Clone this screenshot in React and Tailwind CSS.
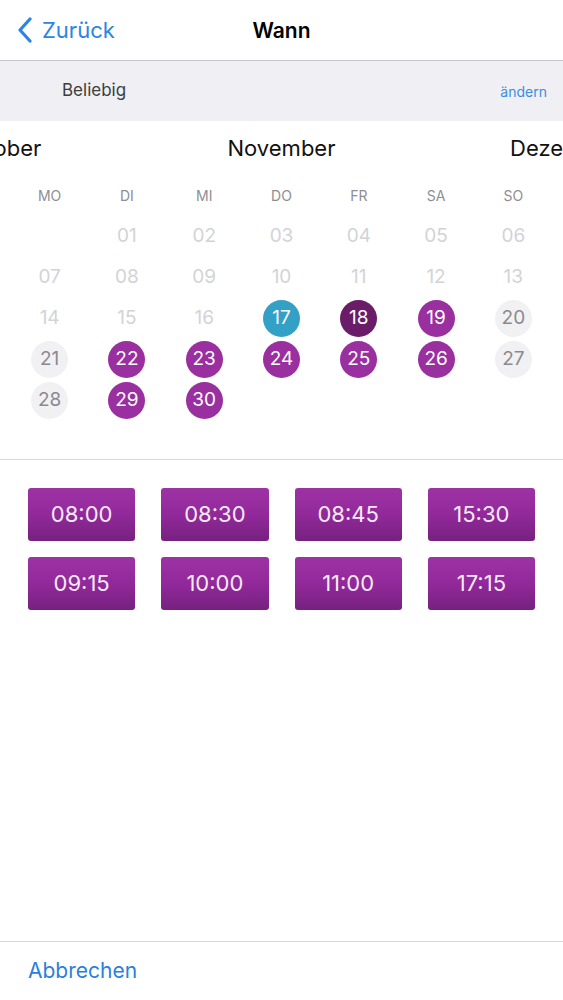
import React from "react";

const WEEKDAYS = ["MO", "DI", "MI", "DO", "FR", "SA", "SO"];

// type: f = faded, g = grey circle, p = purple, d = dark purple, b = blue, e = empty
const ROWS = [
  [["", "e"], ["01", "f"], ["02", "f"], ["03", "f"], ["04", "f"], ["05", "f"], ["06", "f"]],
  [["07", "f"], ["08", "f"], ["09", "f"], ["10", "f"], ["11", "f"], ["12", "f"], ["13", "f"]],
  [["14", "f"], ["15", "f"], ["16", "f"], ["17", "b"], ["18", "d"], ["19", "p"], ["20", "g"]],
  [["21", "g"], ["22", "p"], ["23", "p"], ["24", "p"], ["25", "p"], ["26", "p"], ["27", "g"]],
  [["28", "g"], ["29", "p"], ["30", "p"], ["", "e"], ["", "e"], ["", "e"], ["", "e"]],
];

const TIMES = ["08:00", "08:30", "08:45", "15:30", "09:15", "10:00", "11:00", "17:15"];

function Day({ label, type }) {
  if (type === "e") return <div className="h-[41px]" />;
  if (type === "f")
    return (
      <div className="h-[41px] flex items-center justify-center text-[19px] text-[#d3d3d7]">
        {label}
      </div>
    );
  const cls =
    type === "g"
      ? "bg-[#f1f1f3] text-[#8a8a8e]"
      : type === "b"
      ? "bg-[#33a0c6] text-white"
      : type === "d"
      ? "bg-[#6b1c68] text-white"
      : "bg-[#9a2f9f] text-white";
  return (
    <div className="h-[41px] flex items-center justify-center">
      <div className={`w-[37px] h-[37px] rounded-full flex items-center justify-center text-[19px] ${cls}`}>
        {label}
      </div>
    </div>
  );
}

export default function App() {
  return (
    <div
      className="w-[563px] min-h-[1000px] flex flex-col bg-white overflow-hidden"
      style={{ fontFamily: "Inter, 'Noto Sans', sans-serif" }}
    >
      {/* Nav bar */}
      <div className="h-[61px] grid grid-cols-[1fr_auto_1fr] items-center border-b border-[#c8c7cc]">
        <div className="flex items-center pl-[17px] gap-[9px] text-[#2c84e4]">
          <svg width="16" height="26" viewBox="0 0 16 26" fill="none">
            <path d="M13 2 L3 13 L13 24" stroke="#2c84e4" strokeWidth="3.2" strokeLinecap="round" strokeLinejoin="round" />
          </svg>
          <span className="text-[22px] leading-none">Zurück</span>
        </div>
        <div className="text-[21px] font-semibold text-black leading-none">Wann</div>
        <div />
      </div>

      {/* Filter band */}
      <div className="h-[60px] bg-[#efeff4] flex items-center justify-between pl-[62px] pr-[16px]">
        <span className="text-[17px] text-[#3d3d40]">Beliebig</span>
        <span className="text-[14px] text-[#3a8ee0]">ändern</span>
      </div>

      {/* Month scroller */}
      <div className="h-[54px] flex items-center justify-center overflow-hidden">
        {["Oktober", "November", "Dezember"].map((m) => (
          <div key={m} className="flex-none w-[282px] text-center text-[22px] text-[#111]">
            {m}
          </div>
        ))}
      </div>

      {/* Calendar */}
      <div className="px-[11px] pb-[38px] border-b border-[#d8d8dc]">
        <div className="grid grid-cols-7">
          {WEEKDAYS.map((w) => (
            <div key={w} className="h-[41px] flex items-center justify-center text-[14px] text-[#8e8e93]">
              {w}
            </div>
          ))}
        </div>
        {ROWS.map((row, i) => (
          <div key={i} className="grid grid-cols-7">
            {row.map(([label, type], j) => (
              <Day key={j} label={label} type={type} />
            ))}
          </div>
        ))}
      </div>

      {/* Times */}
      <div className="pt-[28px] px-[28px] grid grid-cols-4 gap-x-[26px] gap-y-[16px]">
        {TIMES.map((t) => (
          <div
            key={t}
            className="h-[53px] rounded-[3px] flex items-center justify-center text-[22px] text-[#f8eaf8] bg-gradient-to-b from-[#9d32a4] via-[#92299a] to-[#762180]"
          >
            {t}
          </div>
        ))}
      </div>

      <div className="flex-1" />

      {/* Bottom */}
      <div className="h-[59px] border-t border-[#d8d8dc] flex items-center pl-[28px]">
        <span className="text-[21px] text-[#2a7fdc]">Abbrechen</span>
      </div>
    </div>
  );
}
